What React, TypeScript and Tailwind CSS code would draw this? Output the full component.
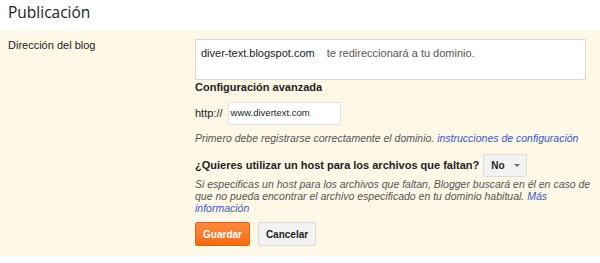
export default function App() {
  return (
    <div className="w-[600px] h-[263px] bg-white font-['Liberation_Sans',Arial,sans-serif] text-[#222]">
      <div className="h-[30px] pl-[8px] flex items-center">
        <h1 className="font-['Open_Sans',sans-serif] text-[15.5px] leading-none text-[#222] -mt-[4px]">Publicación</h1>
      </div>
      <div className="bg-[#fff8e6] h-[226px] flex">
        <div className="w-[195px] shrink-0 pl-[8px] pt-[9px] text-[11px] leading-[13px]">Dirección del blog</div>
        <div className="flex-1 min-w-0 pr-[14px] pt-[9px]">
          <div className="h-[41px] bg-white border border-[#d9d9d9] flex items-start pt-[7px] pl-[5px] text-[11px] leading-[13px]">
            <span className="text-[#222]">diver-text.blogspot.com</span>
            <span className="ml-[12px] text-[#555]">te redireccionará a tu dominio.</span>
          </div>
          <div className="text-[11px] font-bold leading-[13px] mt-[1px]">Configuración avanzada</div>
          <div className="flex items-center mt-[8px]">
            <span className="text-[11px]">http://</span>
            <div className="ml-[5px] w-[113px] h-[23px] bg-white border border-[#e3e3e3] flex items-center pl-[2px] text-[9.5px] text-[#222]">www.divertext.com</div>
          </div>
          <div className="mt-[7px] text-[10.5px] italic leading-[13px] text-[#555] whitespace-nowrap">
            Primero debe registrarse correctamente el dominio. <span className="text-[#3658c8]">instrucciones de configuración</span>
          </div>
          <div className="flex items-center mt-[9px]">
            <span className="text-[11px] font-bold">¿Quieres utilizar un host para los archivos que faltan?</span>
            <div className="ml-[4px] w-[44px] h-[23px] bg-[#f3f3f3] border border-[#dcdcdc] rounded-[2px] flex items-center pl-[7px] gap-[9px]">
              <span className="text-[10px] font-bold text-[#222]">No</span>
              <svg width="6" height="3" viewBox="0 0 6 3"><path d="M0 0h6L3 3z" fill="#666" /></svg>
            </div>
          </div>
          <div className="mt-[1px] text-[10.5px] italic leading-[12px] text-[#555] whitespace-nowrap">
            Si especificas un host para los archivos que faltan, Blogger buscará en él en caso de
            <br />
            que no pueda encontrar el archivo especificado en tu dominio habitual. <span className="text-[#3658c8]">Más</span>
            <br />
            <span className="text-[#3658c8]">información</span>
          </div>
          <div className="flex gap-[8px] mt-[8px]">
            <button className="w-[55px] h-[24px] rounded-[2px] border border-[#e0631c] bg-gradient-to-b from-[#ff8a3a] to-[#f76a10] text-white text-[10px] font-bold">Guardar</button>
            <button className="w-[58px] h-[24px] rounded-[2px] border border-[#dadada] bg-[#f3f3f3] text-[#222] text-[10px] font-bold">Cancelar</button>
          </div>
        </div>
      </div>
    </div>
  );
}
